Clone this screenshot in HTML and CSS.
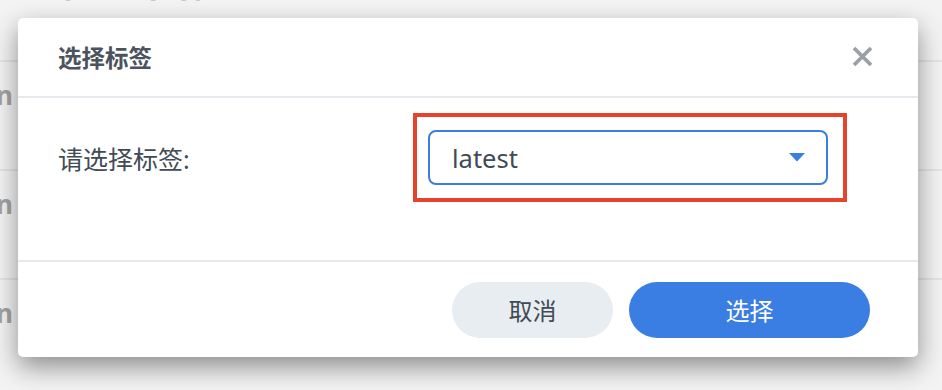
FILE: index.html
```html
<!DOCTYPE html>
<html lang="zh">
<head>
<meta charset="utf-8">
<title>选择标签</title>
<link rel="stylesheet" href="styles.css">
</head>
<body>
<div class="page">
  <div class="top-text">repository type</div>
  <div class="list">
    <div class="row"><span class="cell">n</span></div>
    <div class="row"><span class="cell">n</span></div>
    <div class="row"><span class="cell">n</span></div>
  </div>
</div>

<div class="dialog">
  <div class="dialog-header">
    <span class="dialog-title">选择标签</span>
    <span class="close" aria-label="关闭">
      <svg width="21" height="21" viewBox="0 0 21 21"><path d="M2 2 L19 19 M19 2 L2 19" stroke="#9aa0a6" stroke-width="3.8" stroke-linecap="butt"/></svg>
    </span>
  </div>
  <div class="dialog-body">
    <div class="field">
      <label class="field-label">请选择标签:</label>
      <div class="highlight">
        <div class="select">
          <span class="select-value">latest</span>
          <svg class="caret" width="16" height="9" viewBox="0 0 16 9"><path d="M0 0 H16 L8 8.5 Z" fill="#3b7ee0"/></svg>
        </div>
      </div>
    </div>
  </div>
  <div class="dialog-footer">
    <button class="btn btn-cancel">取消</button>
    <button class="btn btn-primary">选择</button>
  </div>
</div>
</body>
</html>
```

FILE: styles.css
```css
html, body {
  margin: 0;
  padding: 0;
}
body {
  width: 942px;
  height: 390px;
  overflow: hidden;
  background: #f3f3f3;
  font-family: "Noto Sans", "Noto Sans CJK SC", sans-serif;
  position: relative;
}
.page {
  width: 942px;
  height: 390px;
}
.top-text {
  height: 0;
  line-height: 0;
  padding-left: 40px;
  font-size: 24px;
  color: #c9c9c9;
  font-weight: 700;
  position: relative;
  top: -14px;
}
.list {
  padding-top: 60px;
}
.row {
  height: 109px;
  border-top: 2px solid #e4e4e4;
  box-sizing: border-box;
}
.cell {
  display: block;
  margin-left: -4px;
  padding-top: 18px;
  font-size: 26px;
  font-weight: 700;
  color: #a3a3a3;
  line-height: 30px;
}

.dialog {
  position: absolute;
  left: 18px;
  top: 18px;
  width: 900px;
  height: 339px;
  background: #fff;
  border-radius: 5px;
  box-shadow: 0 10px 26px rgba(0, 0, 0, 0.42);
  display: flex;
  flex-direction: column;
  color: #414b55;
}
.dialog-header {
  height: 78px;
  border-bottom: 2px solid #e6eaef;
  display: flex;
  align-items: center;
  justify-content: space-between;
  padding: 0 45px 0 40px;
  flex: none;
}
.dialog-title {
  font-size: 23.5px;
  font-weight: 700;
  color: #4b545e;
}
.close {
  display: flex;
  width: 21px;
  height: 21px;
  margin-top: -2px;
}
.dialog-body {
  height: 164px;
  box-sizing: border-box;
  padding: 15px 0 0 40px;
  border-bottom: 2px solid #e6eaef;
  flex: none;
}
.field {
  display: flex;
  align-items: center;
}
.field-label {
  width: 355px;
  font-size: 25px;
  color: #414b55;
}
.highlight {
  border: 4px solid #e5432b;
  padding: 13px 15px 13px 11px;
}
.select {
  width: 400px;
  height: 55px;
  box-sizing: border-box;
  border: 2px solid #3b7ee0;
  border-radius: 8px;
  display: flex;
  align-items: center;
  justify-content: space-between;
  padding: 0 21px 0 22px;
}
.select-value {
  font-size: 25.5px;
  color: #414b55;
}
.caret {
  display: block;
}
.dialog-footer {
  flex: 1;
  display: flex;
  align-items: center;
  justify-content: flex-end;
  gap: 16px;
  padding-right: 48px;
}
.btn {
  border: none;
  height: 56px;
  border-radius: 28px;
  font-family: "Noto Sans", "Noto Sans CJK SC", sans-serif;
  font-size: 24px;
  padding: 0;
  cursor: pointer;
}
.btn-cancel {
  width: 161px;
  background: #e8edf2;
  color: #414b55;
}
.btn-primary {
  width: 241px;
  background: #3b7ee3;
  color: #fff;
}
```
